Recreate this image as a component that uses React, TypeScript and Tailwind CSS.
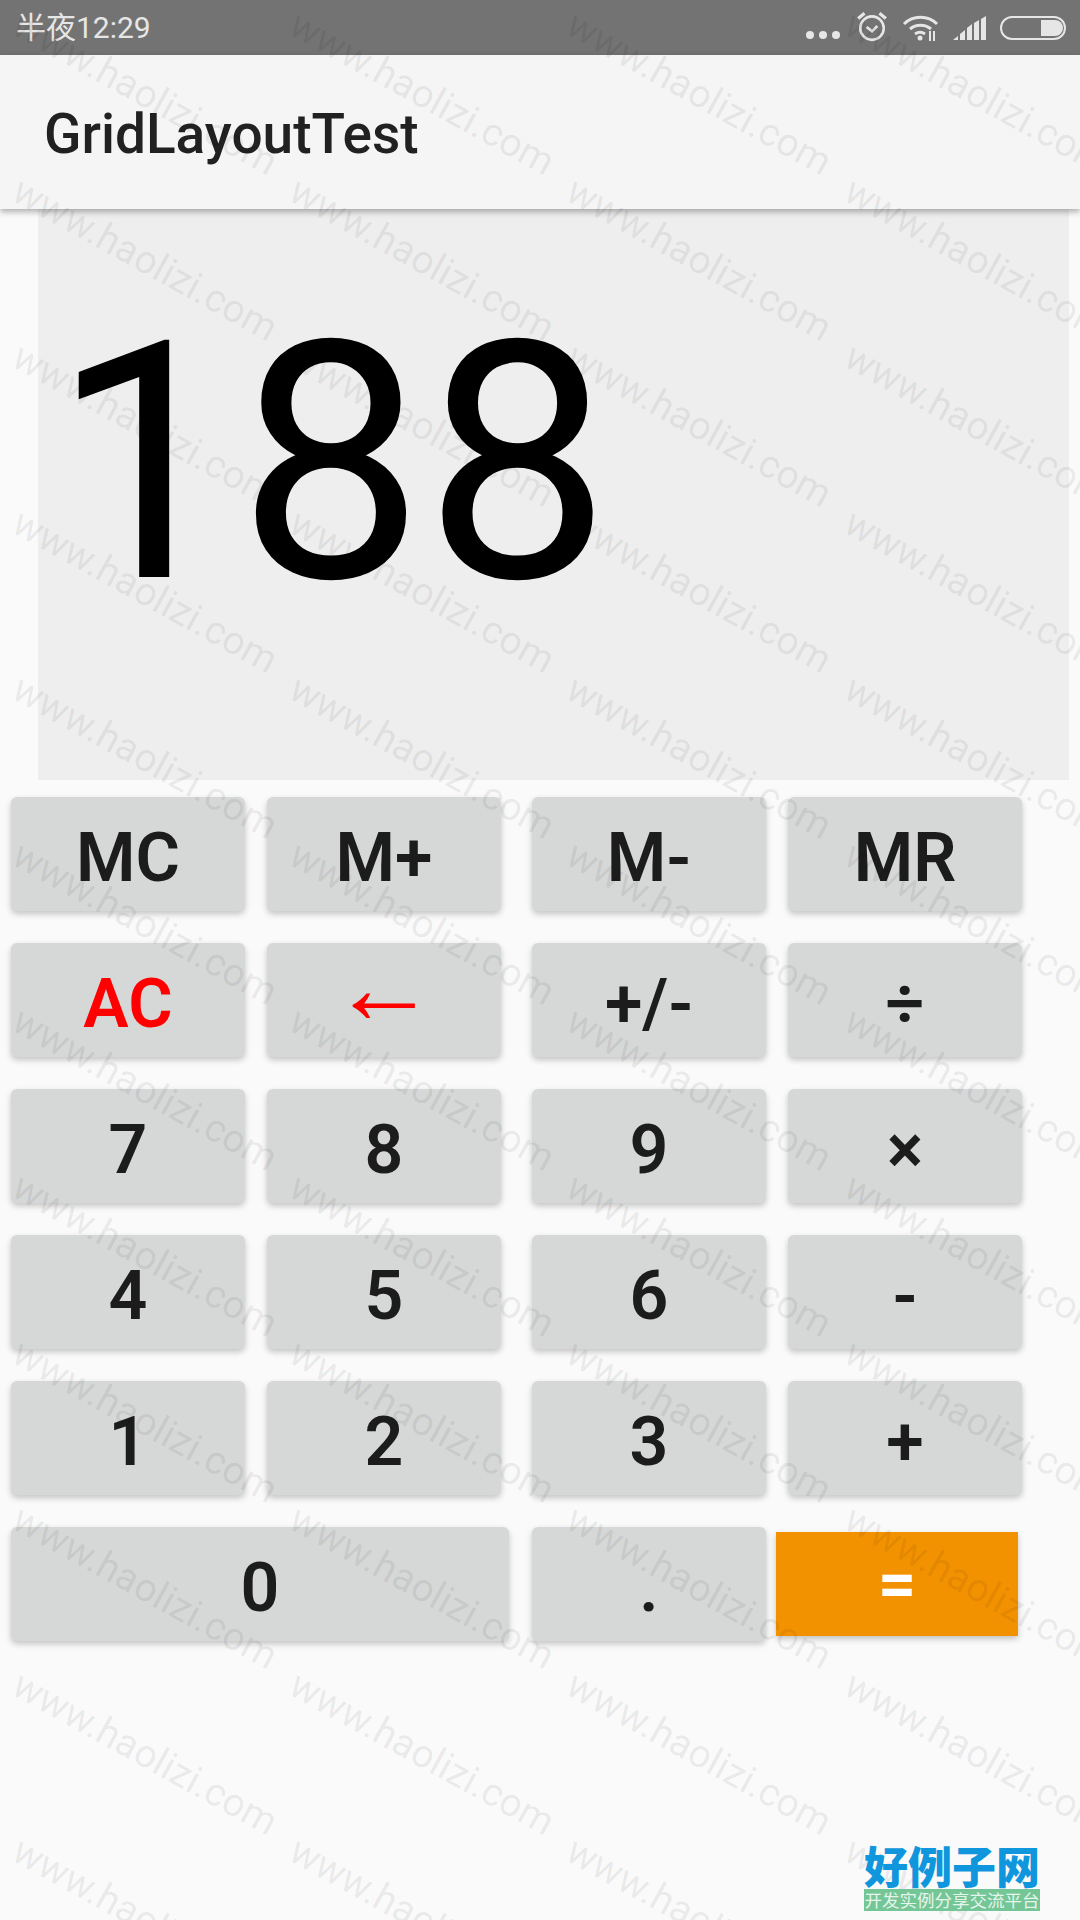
const watermarkRows = [5, 171, 337, 503, 669, 835, 1001, 1167, 1333, 1499, 1665, 1831];
const watermarkCols = [25, 302, 579, 857];

const rows = [
	["MC", "M+", "M-", "MR"],
	["AC", "←", "+/-", "÷"],
	["7", "8", "9", "×"],
	["4", "5", "6", "-"],
	["1", "2", "3", "+"],
];

function CalcButton({ label, className = "" }: { label: string; className?: string }) {
	return (
		<button
			className={`h-[114px] w-[234px] flex items-center justify-center bg-[#d6d7d7] rounded-[6px] shadow-[0_3px_6px_rgba(0,0,0,0.22)] text-[68px] font-semibold leading-none pt-[8px] text-[#1c1c1c] ${className}`}
		>
			{label}
		</button>
	);
}

function StatusIcons() {
	return (
		<div className="flex items-center pr-[14px]">
			<svg width="36" height="10" viewBox="0 0 36 10" className="mt-[14px] mr-[15px]" fill="#e6e6e6">
				<circle cx="5" cy="5" r="4" />
				<circle cx="18" cy="5" r="4" />
				<circle cx="31" cy="5" r="4" />
			</svg>
			<svg width="32" height="32" viewBox="0 0 30 30" fill="none" stroke="#e6e6e6" strokeWidth="2.4" className="-mt-[3px] mr-[14px]">
				<circle cx="15" cy="17" r="11" />
				<path d="M10 16l5 4 5-5" />
				<path d="M2 8l6-5M28 8l-6-5" strokeWidth="3" />
			</svg>
			<svg width="37" height="27" viewBox="0 0 37 27" fill="none" stroke="#e6e6e6" strokeWidth="3" className="mr-[14px]">
				<path d="M2 10c9-9 24-9 33 0" />
				<path d="M8 15c6-5 15-5 21 0" />
				<path d="M13 20c3-2 7-2 10 0" />
				<circle cx="18" cy="24" r="2.5" fill="#e6e6e6" stroke="none" />
				<path d="M28 17v10M32 17v10" strokeWidth="2" />
			</svg>
			<svg width="34" height="24" viewBox="0 0 34 24" fill="#e6e6e6" className="mr-[13px]">
				<path d="M0 24l5-4v4zM7 24v-6l5-4v10zM14 24V12l5-4v16zM21 24V7l5-3v20zM28 24V3l5-3v24z" />
			</svg>
			<svg width="66" height="24" viewBox="0 0 66 24" fill="none">
				<rect x="1" y="1" width="64" height="22" rx="11" stroke="#e6e6e6" strokeWidth="2" />
				<path d="M41 4h14a8 8 0 0 1 0 16H41z" fill="#e6e6e6" />
			</svg>
		</div>
	);
}

export default function App() {
	return (
		<div className="relative w-[1080px] h-[1920px] overflow-hidden bg-[#fafafa] font-[Roboto,'Noto_Sans_CJK_SC',sans-serif]">
			<div className="h-[55px] bg-[#737373] flex items-center justify-between pl-[16px]">
				<span className="text-[30px] text-[#e6e6e6] leading-none">半夜12:29</span>
				<StatusIcons />
			</div>

			<div className="relative z-10 h-[154px] bg-[#f5f5f5] flex items-center pl-[44px] pt-[4px] shadow-[0_3px_6px_rgba(0,0,0,0.3)]">
				<h1 className="text-[55px] font-medium text-[#212121] leading-none">GridLayoutTest</h1>
			</div>

			<div className="ml-[38px] w-[1031px] h-[571px] bg-[#eeeeee] pl-[13px] pt-[55px]">
				<span className="block text-[332px] leading-[400px] text-black">188</span>
			</div>

			<div className="mt-[17px] pl-[11px] grid grid-cols-[256px_265px_256px_292px] gap-y-[32px]">
				{rows.map((row) =>
					row.map((label) => (
						<CalcButton
							key={label}
							label={label}
							className={
								label === "AC"
									? "text-[#ff0000]"
									: label === "←"
										? "text-[#ff0000] !font-normal !text-[105px] !pt-0 pb-[26px] font-['Liberation_Serif',serif]"
										: ""
							}
						/>
					)),
				)}
				<CalcButton label="0" className="col-span-2 !w-[498px]" />
				<CalcButton label="." />
				<button className="mt-[5px] -ml-[12px] h-[104px] w-[242px] flex items-center justify-center bg-[#f39200] shadow-[0_3px_6px_rgba(0,0,0,0.22)] text-[68px] font-semibold leading-none text-white">
					=
				</button>
			</div>

			{/* watermark sits over everything */}
			<div className="absolute inset-0 z-20 pointer-events-none">
				{watermarkRows.map((y) =>
					watermarkCols.map((x) => (
						<span
							key={`${x}-${y}`}
							className="absolute origin-top-left rotate-[29deg] text-[39px] leading-none whitespace-nowrap text-black/[0.08]"
							style={{ left: x, top: y }}
						>
							www.haolizi.com
						</span>
					)),
				)}
			</div>

			<div className="absolute z-30 left-[864px] top-[1842px] w-[176px] flex flex-col">
				<div className="text-[44px] leading-[46px] font-black text-[#0f96dc] text-center whitespace-nowrap font-['Noto_Sans_CJK_SC',sans-serif]">
					好例子网
				</div>
				<div className="mt-[1px] h-[22px] bg-[#74c696] text-[#e6f5ec] text-[17.5px] leading-[22px] text-center whitespace-nowrap font-['Noto_Sans_CJK_SC',sans-serif]">
					开发实例分享交流平台
				</div>
			</div>
		</div>
	);
}
